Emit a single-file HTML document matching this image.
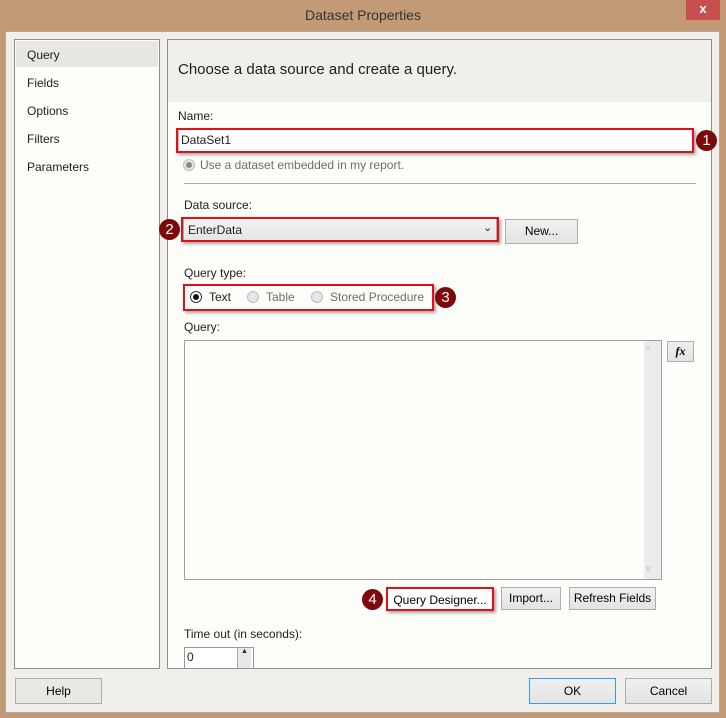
<!DOCTYPE html><html><head><style>
*{box-sizing:border-box;margin:0;padding:0}
body{width:726px;height:718px;background:#c39a76;position:relative;overflow:hidden;font-family:"Liberation Sans",sans-serif;font-size:12px;color:#1e1e1e}
.a{position:absolute}
.btn{position:absolute;border:1px solid #adadad;background:linear-gradient(#f0f0f0,#e3e3e3);text-align:center;font-size:12px;color:#000}
.red{position:absolute;border:2px solid #e0101a;box-shadow:2px 2px 3px rgba(0,0,0,.35)}
.num{position:absolute;width:21px;height:21px;border-radius:50%;background:#7d0a0a;color:#fff;font-size:15px;text-align:center;line-height:21px}
.rad{position:absolute;width:12px;height:12px;border-radius:50%;border:1px solid #bcbcbc;background:#e6e6e6}
.g{color:#6d6d6d}
</style></head><body>
<div class="a" style="left:0;top:7px;width:726px;text-align:center;font-size:14px;color:#333">Dataset Properties</div>
<div class="a" style="left:686px;top:0;width:34px;height:20px;background:#c7504f;color:#fff;text-align:center;font-weight:bold;font-size:13px;line-height:18px">x</div>
<div class="a" style="left:5px;top:31px;width:715px;height:682px;background:#f0efeb;border:1px solid #b5a898"></div>
<div class="a" style="left:14px;top:39px;width:146px;height:630px;background:#fdfdf9;border:1px solid #8e8e8e"></div>
<div class="a" style="left:16px;top:41px;width:142px;height:26px;background:#e8e7e3"></div>
<div class="a" style="left:27px;top:47px;line-height:16px">Query</div>
<div class="a" style="left:27px;top:75px;line-height:16px">Fields</div>
<div class="a" style="left:27px;top:103px;line-height:16px">Options</div>
<div class="a" style="left:27px;top:131px;line-height:16px">Filters</div>
<div class="a" style="left:27px;top:159px;line-height:16px">Parameters</div>
<div class="a" style="left:167px;top:39px;width:545px;height:630px;background:#fdfdf9;border:1px solid #8e8e8e"></div>
<div class="a" style="left:168px;top:40px;width:543px;height:62px;background:#f0efeb"></div>
<div class="a" style="left:178px;top:61px;font-size:15px;color:#1e1e1e">Choose a data source and create a query.</div>
<div class="a" style="left:178px;top:109px">Name:</div>
<div class="a" style="left:178px;top:129px;width:515px;height:24px;background:#fff;border:1px solid #bbb"></div>
<div class="red" style="left:176px;top:128px;width:518px;height:25px"></div>
<div class="a" style="left:181px;top:133px">DataSet1</div>
<div class="num" style="left:696px;top:130px">1</div>
<div class="rad" style="left:183px;top:159px"><div style="margin:2px;width:6px;height:6px;border-radius:50%;background:#888"></div></div>
<div class="a g" style="left:200px;top:158px">Use a dataset embedded in my report.</div>
<div class="a" style="left:184px;top:183px;width:512px;height:1px;background:#aaa"></div>
<div class="a" style="left:184px;top:198px">Data source:</div>
<div class="a" style="left:183px;top:218px;width:314px;height:24px;background:linear-gradient(#f3f3f3,#e5e5e5);border:1px solid #aaa"></div>
<div class="red" style="left:181px;top:217px;width:318px;height:25px"></div>
<div class="a" style="left:188px;top:223px">EnterData</div>
<div class="a" style="left:483px;top:221px;font-size:11px">&#8964;</div>
<div class="num" style="left:159px;top:219px">2</div>
<div class="btn" style="left:505px;top:219px;width:73px;height:25px;line-height:23px">New...</div>
<div class="a" style="left:184px;top:266px">Query type:</div>
<div class="red" style="left:183px;top:284px;width:251px;height:27px"></div>
<div class="rad" style="left:190px;top:291px;background:#fff;border-color:#333"><div style="margin:2px;width:6px;height:6px;border-radius:50%;background:#111"></div></div>
<div class="a" style="left:209px;top:290px">Text</div>
<div class="rad" style="left:247px;top:291px"></div>
<div class="a g" style="left:266px;top:290px">Table</div>
<div class="rad" style="left:311px;top:291px"></div>
<div class="a g" style="left:330px;top:290px">Stored Procedure</div>
<div class="num" style="left:435px;top:287px">3</div>
<div class="a" style="left:184px;top:320px">Query:</div>
<div class="a" style="left:184px;top:340px;width:478px;height:240px;background:#fdfdf9;border:1px solid #a0a0a0"></div>
<div class="a" style="left:644px;top:341px;width:17px;height:238px;background:#ececec"></div>
<div class="a" style="left:646px;top:345px;font-size:9px;color:#bbb">^</div>
<div class="a" style="left:646px;top:563px;font-size:9px;color:#bbb">v</div>
<div class="btn" style="left:667px;top:341px;width:27px;height:21px;line-height:19px;font-family:'Liberation Serif',serif;font-style:italic;font-weight:bold">fx</div>
<div class="num" style="left:362px;top:589px">4</div>
<div class="btn" style="left:386px;top:587px;width:108px;height:24px;line-height:22px;border:2px solid #e0101a;background:#fff;box-shadow:2px 2px 3px rgba(0,0,0,.35)">Query Designer...</div>
<div class="btn" style="left:501px;top:587px;width:60px;height:23px;line-height:21px">Import...</div>
<div class="btn" style="left:569px;top:587px;width:87px;height:23px;line-height:21px">Refresh Fields</div>
<div class="a" style="left:184px;top:627px">Time out (in seconds):</div>
<div class="a" style="left:184px;top:647px;width:70px;height:21px;background:#fff;border:1px solid #999;border-bottom:none"></div>
<div class="a" style="left:187px;top:650px">0</div>
<div class="a" style="left:237px;top:648px;width:14px;height:20px;background:#e8e8e8;border-left:1px solid #aaa;font-size:7px;text-align:center">▲</div>
<div class="btn" style="left:15px;top:678px;width:87px;height:26px;line-height:24px;background:#e8e8e5">Help</div>
<div class="btn" style="left:529px;top:678px;width:87px;height:26px;line-height:24px;border-color:#3c9ae8">OK</div>
<div class="btn" style="left:625px;top:678px;width:87px;height:26px;line-height:24px">Cancel</div>
</body></html>
